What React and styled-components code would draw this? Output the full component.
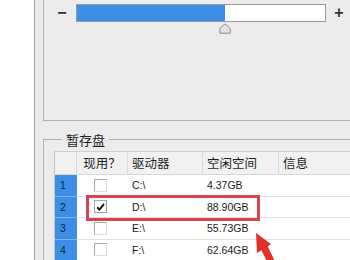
import React from 'react';
import styled, { createGlobalStyle } from 'styled-components';

const GlobalStyle = createGlobalStyle`
        html, body {
                margin: 0;
                padding: 0;
                background: #ffffff;
                overflow: hidden;
        }
        body {
                font-family: "Liberation Sans", "Noto Sans CJK SC", sans-serif;
        }
`

const Page = styled.div`
        width: 350px;
        height: 260px;
        overflow: hidden;
        padding-left: 34px;
        box-sizing: border-box;
`

const Panel = styled.div`
        height: 260px;
        width: 360px;
        border-left: 1px solid #a3a3a3;
        background: #ececec;
        padding-left: 8px;
        box-sizing: border-box;
`

const TopGroup = styled.div`
        height: 121px;
        width: 330px;
        box-sizing: border-box;
        border: 1px solid #b2b2b2;
        border-top: none;
`

const SliderRow = styled.div`
        display: flex;
        align-items: center;
        padding: 4px 0 0 13px;
`

const Sign = styled.span`
        width: 10px;
        font: bold 16px/18px "Liberation Sans", sans-serif;
        color: #333333;
        text-align: center;
        margin-right: ${props => props.$before ? '9px' : '0'};
        margin-left: ${props => props.$after ? '8px' : '0'};
`

const Track = styled.div`
        position: relative;
        width: 250px;
        height: 18px;
        box-sizing: border-box;
        border: 1px solid #9a9a9a;
        background: #ffffff;
`

const Fill = styled.div`
        height: 100%;
        background: #3c8ee9;
`

const Thumb = styled.svg`
        position: absolute;
        top: 18px;
        width: 12px;
        height: 11px;
`

const Group = styled.fieldset`
        margin: 11px 0 0 0;
        width: 330px;
        box-sizing: border-box;
        border: 1px solid #b2b2b2;
        padding: 0 0 0 10px;
        min-width: 0;
`

const Legend = styled.legend`
        margin-left: 8px;
        padding: 0 4px;
        font: 13px/15px "Noto Sans CJK SC", sans-serif;
        color: #222222;
`

const Table = styled.div`
        position: relative;
        margin-top: 4px;
        width: 330px;
        border-left: 1px solid #c4c4c4;
        border-top: 1px solid #cfcfcf;
        background: #ffffff;
`

const Head = styled.div`
        display: flex;
        height: 22px;
        background: #f1f1f1;
        border-bottom: 1px solid #d6d6d6;
`

const HeadCell = styled.div`
        width: ${props => props.$w}px;
        box-sizing: border-box;
        border-right: 1px solid #dadada;
        padding-left: ${props => props.$center ? '0' : '4px'};
        text-align: ${props => props.$center ? 'center' : 'left'};
        font: 12.5px/22px "Noto Sans CJK SC", sans-serif;
        color: #1e1e1e;
        white-space: nowrap;
`

const Row = styled.div`
        display: flex;
        height: 21.5px;
        box-sizing: border-box;
        border-bottom: 1px solid #e1e1e1;
`

const NumCell = styled.div`
        width: 22px;
        box-sizing: border-box;
        background: #3c8ee6;
        margin-bottom: -1px;
        border-bottom: 1px solid #7fb4ec;
        padding-left: 5px;
        font: 10.5px/21px "Liberation Sans", sans-serif;
        color: #14243d;
`

const CheckCell = styled.div`
        width: 51px;
        display: flex;
        align-items: center;
        padding-left: 17px;
        box-sizing: border-box;
`

const Box = styled.div`
        width: 13px;
        height: 13px;
        box-sizing: border-box;
        border: 1px solid ${props => props.$on ? '#9a9a9a' : '#dcdcdc'};
        border-top-color: #a8a8a8;
        border-left-color: #a8a8a8;
        background: #ffffff;
        display: flex;
        align-items: center;
        justify-content: center;
`

const Cell = styled.div`
        width: ${props => props.$w}px;
        box-sizing: border-box;
        padding-left: 4px;
        font: 10.5px/21px "Liberation Sans", sans-serif;
        color: #1a1a1a;
`

const Highlight = styled.div`
        position: absolute;
        left: 31px;
        top: 43px;
        width: 174px;
        height: 26px;
        box-sizing: border-box;
        border: 3px solid #d8444b;
`

const Arrow = styled.svg`
        position: absolute;
        left: 195px;
        top: 78px;
        width: 32px;
        height: 40px;
`

const columns = [
        { label: '', w: 22 },
        { label: '现用？', w: 51, center: true },
        { label: '驱动器', w: 75 },
        { label: '空闲空间', w: 76 },
        { label: '信息', w: 106 },
]

const drives = [
        { n: 1, on: false, drive: 'C:\\', free: '4.37GB' },
        { n: 2, on: true, drive: 'D:\\', free: '88.90GB' },
        { n: 3, on: false, drive: 'E:\\', free: '55.73GB' },
        { n: 4, on: false, drive: 'F:\\', free: '62.64GB' },
]

const fillWidth = 149

export default function App() {
        return (
                <>
                        <GlobalStyle />
                        <Page>
                                <Panel>
                                        <TopGroup>
                                                <SliderRow>
                                                        <Sign $before>−</Sign>
                                                        <Track>
                                                                <Fill style={{ width: fillWidth - 1 }} />
                                                                <Thumb viewBox="0 0 12 11" style={{ left: fillWidth - 7 }}>
                                                                        <path d="M6 0.8 L11.2 5.5 L11.2 10.2 L0.8 10.2 L0.8 5.5 Z" fill="#e4e4e4" stroke="#8c8c8c" strokeWidth="1" strokeLinejoin="round" />
                                                                </Thumb>
                                                        </Track>
                                                        <Sign $after>+</Sign>
                                                </SliderRow>
                                        </TopGroup>
                                        <Group>
                                                <Legend>暂存盘</Legend>
                                                <Table>
                                                        <Head>
                                                                {columns.map((c, i) => (
                                                                        <HeadCell key={i} $w={c.w} $center={c.center}>{c.label}</HeadCell>
                                                                ))}
                                                        </Head>
                                                        {drives.map(d => (
                                                                <Row key={d.n}>
                                                                        <NumCell>{d.n}</NumCell>
                                                                        <CheckCell>
                                                                                <Box $on={d.on}>
                                                                                        {d.on && (
                                                                                                <svg width="9" height="8" viewBox="0 0 9 8">
                                                                                                        <path d="M1.2 4.2 L3.4 6.6 L8 1" fill="none" stroke="#1e1e1e" strokeWidth="2" />
                                                                                                </svg>
                                                                                        )}
                                                                                </Box>
                                                                        </CheckCell>
                                                                        <Cell $w={75}>{d.drive}</Cell>
                                                                        <Cell $w={76}>{d.free}</Cell>
                                                                        <Cell $w={106} />
                                                                </Row>
                                                        ))}
                                                        <Highlight />
                                                        <Arrow viewBox="0 0 32 40">
                                                                <path d="M6 3 L7 23 L11.5 20.2 L20 38 L26.5 34.8 L17.8 16.6 L21 14 Z" fill="#e2302a" />
                                                        </Arrow>
                                                </Table>
                                        </Group>
                                </Panel>
                        </Page>
                </>
        )
}
